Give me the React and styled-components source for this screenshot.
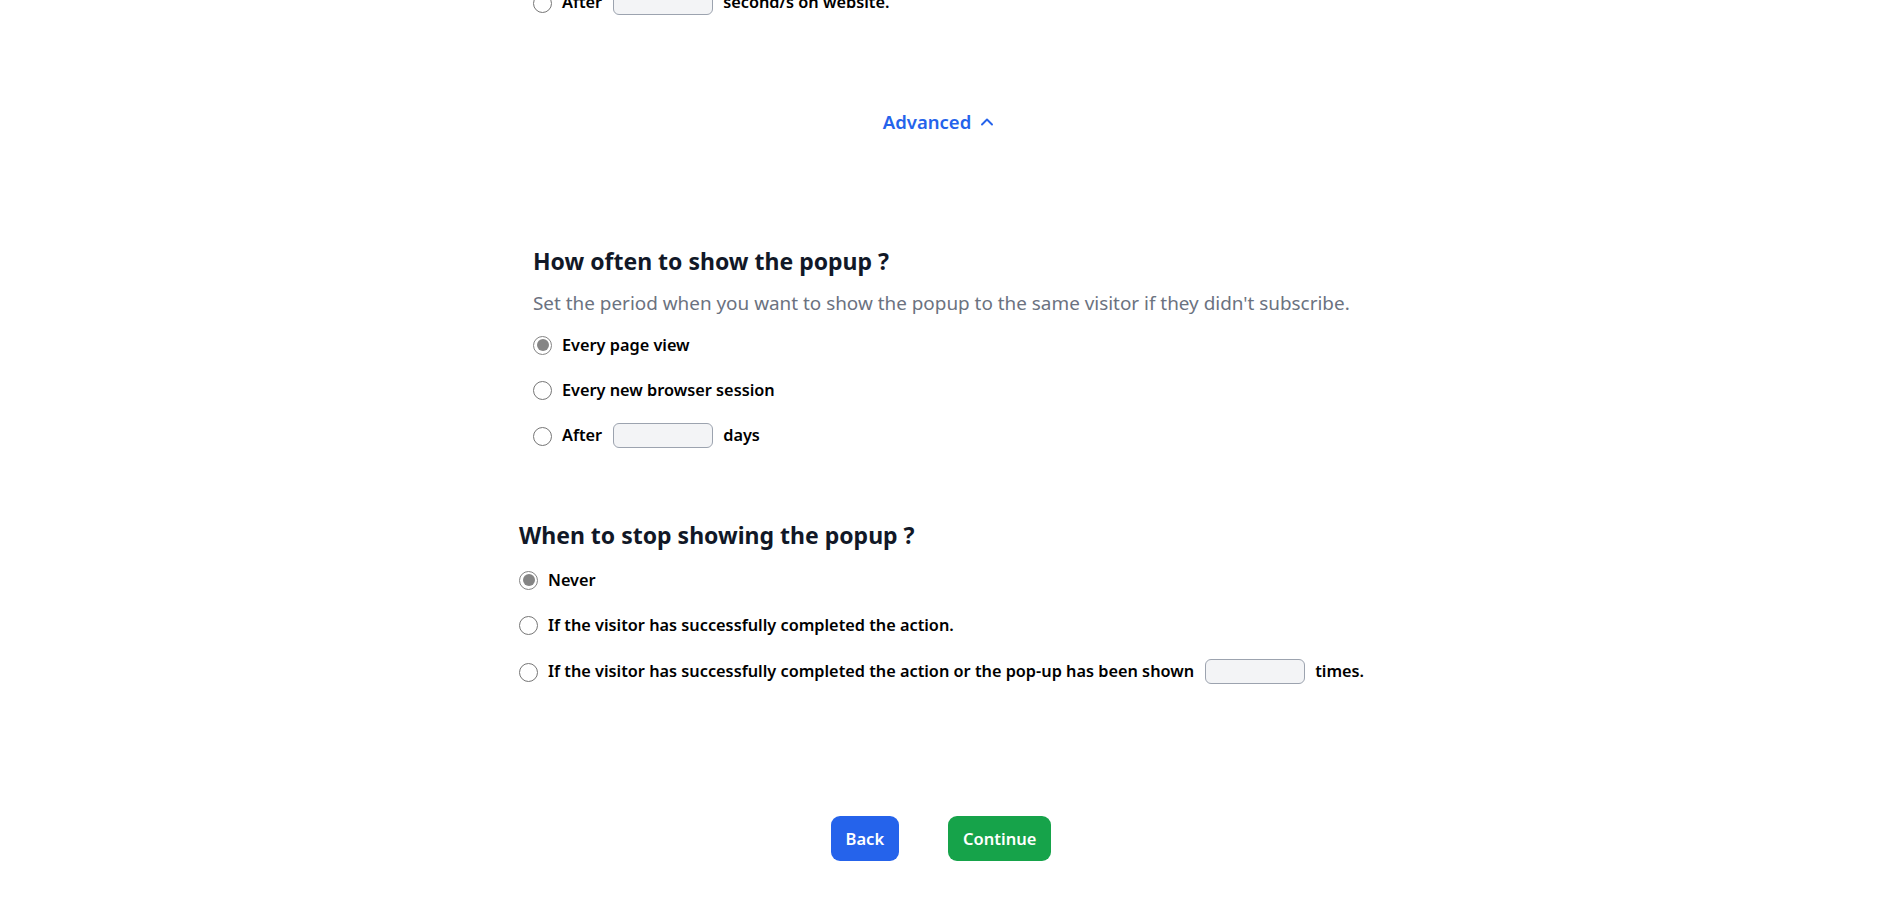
import React, { useState } from 'react';
import styled, { createGlobalStyle } from 'styled-components';
import { ChevronUp } from 'lucide-react';

const GlobalStyle = createGlobalStyle`
  html, body {
    margin: 0;
    padding: 0;
    background: #ffffff;
  }
  body {
    font-family: "Noto Sans", "Open Sans", Arial, sans-serif;
    color: #000000;
    overflow: hidden;
  }
`;

const Page = styled.div`
  width: 850px;
  margin: 0 auto;
  display: flex;
  flex-direction: column;
`;

const Section = styled.div`
  display: flex;
  flex-direction: column;
  padding-left: ${({ $indent }) => $indent || 0}px;
  margin-top: ${({ $top }) => $top || 0}px;
`;

const Options = styled.div`
  display: flex;
  flex-direction: column;
  gap: 17px;
  margin-top: ${({ $top }) => $top || 0}px;
`;

const Row = styled.label`
  display: flex;
  align-items: center;
  min-height: 28px;
  margin-top: ${({ $shift }) => $shift || 0}px;
  font-size: 16.3px;
  font-weight: 600;
  color: #000000;
  cursor: pointer;
  white-space: nowrap;
`;

const Radio = styled.input.attrs({ type: 'radio' })`
  appearance: none;
  flex: none;
  width: 19px;
  height: 19px;
  margin: ${({ $low }) => ($low ? '3px' : '0')} 10px 0 0;
  border: 1px solid #767676;
  border-radius: 50%;
  background: #ffffff;
  display: grid;
  place-content: center;
  cursor: pointer;

  &::before {
    content: '';
    width: 12px;
    height: 12px;
    border-radius: 50%;
    background: #858585;
    transform: scale(${({ checked }) => (checked ? 1 : 0)});
  }
  &:checked {
    border-color: #858585;
  }
`;

const SmallInput = styled.input`
  width: 100px;
  height: 25px;
  box-sizing: border-box;
  margin: 0 10px 0 11px;
  border: 1px solid #9ca3af;
  border-radius: 6px;
  background: #f3f4f6;
  font-family: inherit;
  font-size: 15px;
  padding: 0 8px;
  outline: none;
`;

const Heading = styled.h2`
  margin: 0;
  font-size: 23px;
  line-height: 32px;
  font-weight: 700;
  color: #111827;
`;

const Description = styled.p`
  margin: 12px 0 0;
  font-size: 18.9px;
  line-height: 28px;
  color: #6b7280;
`;

const AdvancedToggle = styled.button`
  align-self: center;
  display: flex;
  align-items: center;
  gap: 6px;
  margin: 93px 8px 0 0;
  padding: 0;
  border: none;
  background: none;
  font-family: inherit;
  font-size: 18.5px;
  line-height: 26px;
  font-weight: 600;
  color: #2563eb;
  cursor: pointer;
`;

const Footer = styled.div`
  display: flex;
  justify-content: center;
  gap: 49px;
  margin-top: 131px;
  padding-right: 6px;
`;

const Button = styled.button`
  height: 45px;
  padding: 0 15px;
  border: none;
  border-radius: 9px;
  background: ${({ $variant }) => ($variant === 'green' ? '#16a34a' : '#2563eb')};
  color: #ffffff;
  font-family: inherit;
  font-size: 16.5px;
  font-weight: 600;
  cursor: pointer;
`;

const TopRow = styled(Row)`
  margin-top: -12px;
`;

const App = () => {
  const [often, setOften] = useState('page');
  const [stop, setStop] = useState('never');
  const [advancedOpen, setAdvancedOpen] = useState(true);

  return (
    <>
      <GlobalStyle />
      <Page>
        <Section $indent={14}>
          <TopRow>
            <Radio name="when" checked={false} readOnly $low />
            After
            <SmallInput type="text" />
            second/s on website.
          </TopRow>
        </Section>

        <AdvancedToggle onClick={() => setAdvancedOpen(!advancedOpen)}>
          Advanced
          <ChevronUp size={20} strokeWidth={2.3} />
        </AdvancedToggle>

        <Section $indent={14} $top={110}>
          <Heading>How often to show the popup ?</Heading>
          <Description>
            Set the period when you want to show the popup to the same visitor if they didn't subscribe.
          </Description>
          <Options $top={14}>
            <Row>
              <Radio name="often" checked={often === 'page'} onChange={() => setOften('page')} />
              Every page view
            </Row>
            <Row>
              <Radio name="often" checked={often === 'session'} onChange={() => setOften('session')} />
              Every new browser session
            </Row>
            <Row>
              <Radio name="often" checked={often === 'days'} onChange={() => setOften('days')} $low />
              After
              <SmallInput type="text" />
              days
            </Row>
          </Options>
        </Section>

        <Section $top={70}>
          <Heading>When to stop showing the popup ?</Heading>
          <Options $top={15}>
            <Row>
              <Radio name="stop" checked={stop === 'never'} onChange={() => setStop('never')} />
              Never
            </Row>
            <Row>
              <Radio name="stop" checked={stop === 'done'} onChange={() => setStop('done')} />
              If the visitor has successfully completed the action.
            </Row>
            <Row $shift={1}>
              <Radio name="stop" checked={stop === 'times'} onChange={() => setStop('times')} $low />
              If the visitor has successfully completed the action or the pop-up has been shown
              <SmallInput type="text" />
              times.
            </Row>
          </Options>
        </Section>

        <Footer>
          <Button>Back</Button>
          <Button $variant="green">Continue</Button>
        </Footer>
      </Page>
    </>
  );
};

export default App;
